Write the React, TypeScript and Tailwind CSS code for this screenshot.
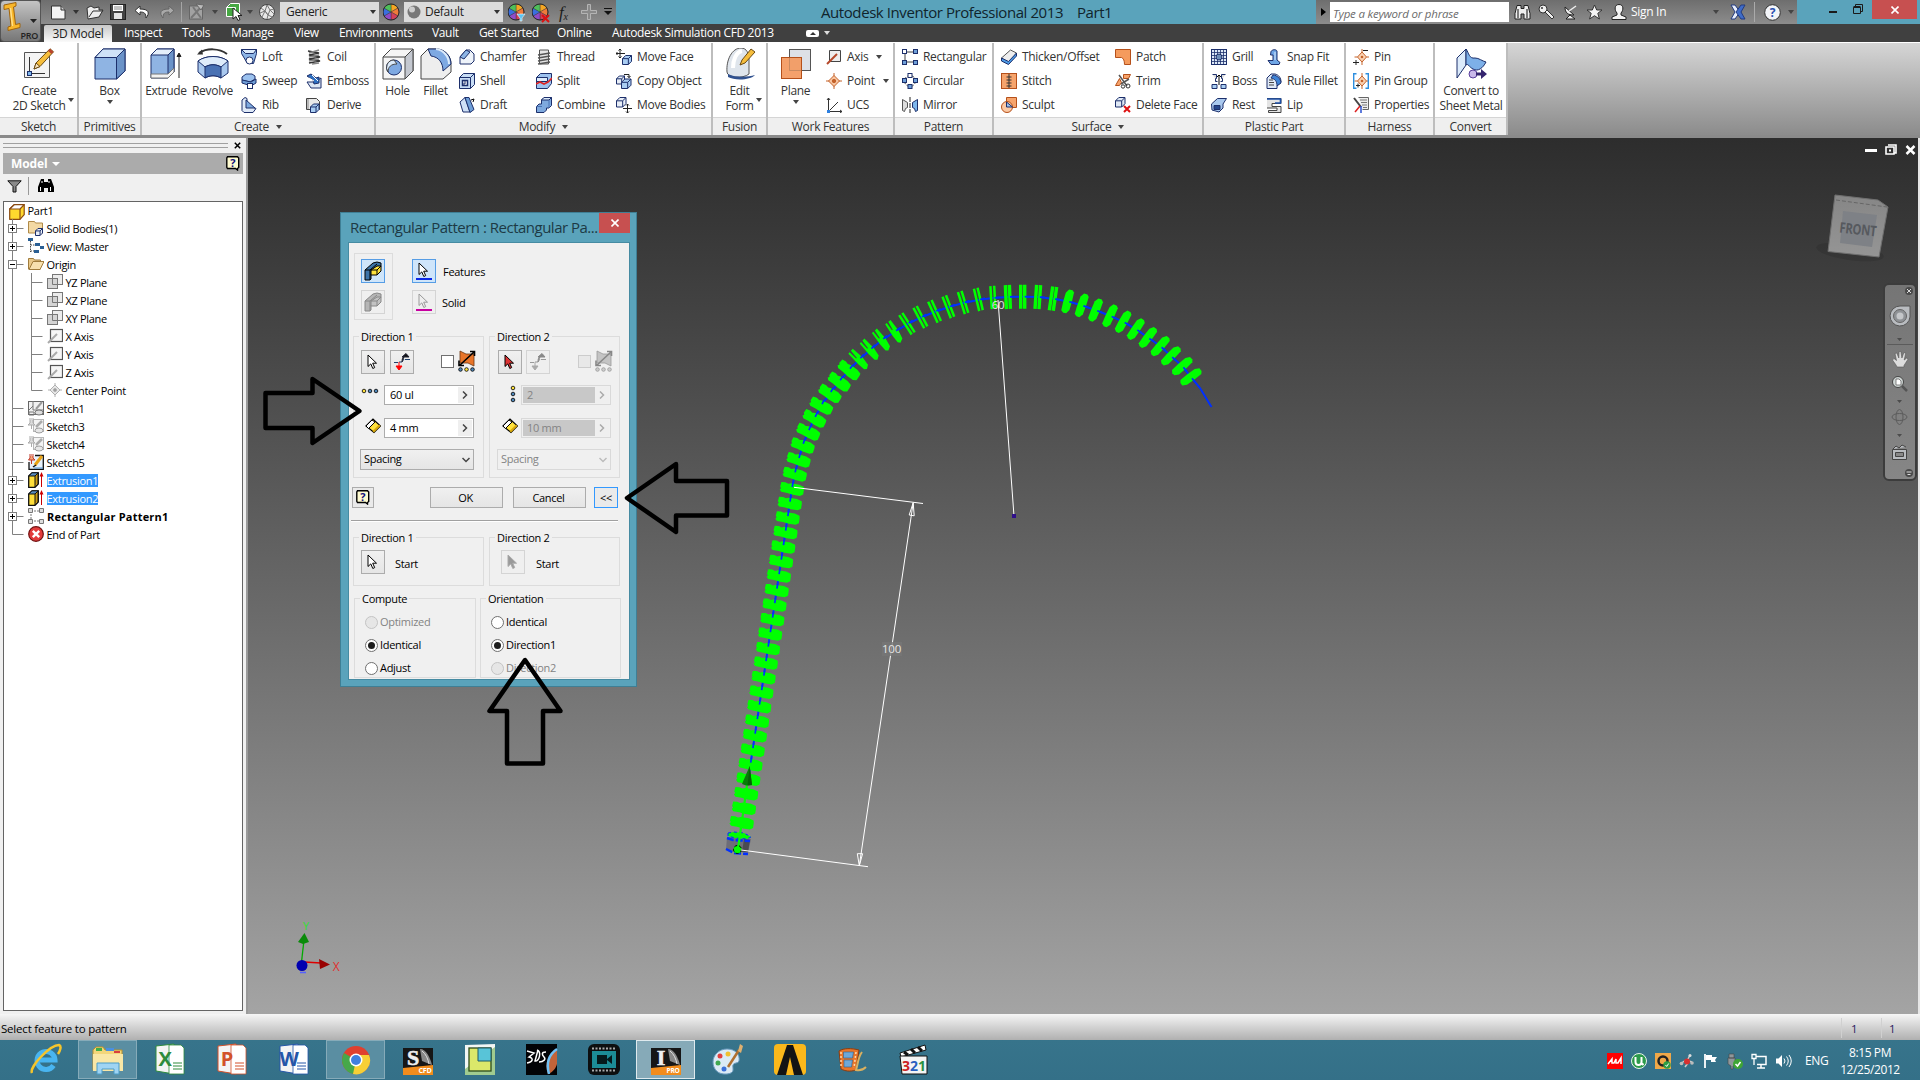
import type { ReactNode } from "react"

const INK = "#1c2f6b"

// ── 16px icons ─────────────────────────────────────────────
const cube = (x: number, y: number, s: number, fill = "#a9cdf2") => (
  <g fill={fill} stroke={INK} strokeLinejoin="round">
    <path d={`M${x} ${y + s * 0.35}l${s * 0.35} ${-s * 0.35}h${s * 0.65}v${s * 0.65}l${-s * 0.35} ${s * 0.35}h${-s * 0.65}z`} />
    <path d={`M${x} ${y + s * 0.35}h${s * 0.65}v${s * 0.65}M${x + s * 0.65} ${y + s * 0.35}l${s * 0.35} ${-s * 0.35}`} fill="none" />
  </g>
)

const pinShape = (
  <g>
    <path d="M9 3l4.5 5L9 13 4.500 8z" fill="#fbd3b3" stroke="#c4622a" />
    <path d="M9 0v3M9 13v3M1.500 8h3M13.500 8h2.500" stroke="#c4622a" />
    <circle cx="9" cy="8" r="1.300" fill="#c4622a" />
  </g>
)

const ICONS: Record<string, ReactNode> = {
  loft: (
    <g stroke={INK}>
      <path d="M.5.5h15v4l-3 10h-6l-6-10z" fill="#8db5e6" />
      <path d="M.5.5h15l-3 4h-8z" fill="#dcebfb" />
      <circle cx="8.500" cy="11.500" r="3.500" fill="#fff" />
    </g>
  ),
  sweep: (
    <g stroke={INK} fill="#9cc2ef">
      <path d="M1 4l4-3h6l3 2v3l-5 3-8-2z" />
      <path d="M1 7l9 2 5-3v4l-5 3-9-3z" fill="#6f9fd8" />
      <rect x="6.500" y="10.500" width="5" height="5" fill="#fff" />
    </g>
  ),
  rib: (
    <g stroke={INK}>
      <path d="M1 3l3-2.500 2 1v6l9 4-3 4H3l-2-2z" fill="#dfe9f7" />
      <path d="M5 3v8h9z" fill="#7ea9de" />
    </g>
  ),
  coil: (
    <g stroke="#333" fill="none" strokeWidth="1.600">
      <path d="M2 2l11 2L3 6l11 2L3 10l11 2-11 2" />
      <path d="M13 1L3 4M13 6L3 8M13 10L3 12M13 14l-7 1" stroke="#888" />
    </g>
  ),
  emboss: (
    <g stroke={INK}>
      <path d="M1 9h8l6-4v10H5z" fill="#dce6f3" />
      <path d="M1 3l4-2 5 4 3-1v6l-5 1-1-4z" fill="#2d6fc0" />
      <path d="M3 5l5 3M6 2l6 6" stroke="#fff" />
    </g>
  ),
  derive: (
    <g>
      <path d="M.5 1.500h10l3 3v8H.5z" fill="#e8e8e8" stroke="#444" />
      <path d="M2 2v10" stroke="#888" />
      {cube(4.5, 7, 8.500)}
    </g>
  ),
  chamfer: (
    <g stroke={INK}>
      <path d="M1 8l6-7h4l4 4v7l-3 3H1z" fill="#eef3fa" />
      <path d="M1 8l6-7 4 2-6 7z" fill="#8db5e6" />
    </g>
  ),
  shell: (
    <g stroke={INK}>
      <path d="M.5 4.500l4-4h11v11l-4 4H.5z" fill="#c8ddf5" />
      <path d="M.5 4.500h11v11M11.500 4.500l4-4" fill="none" />
      <rect x="3.500" y="7.500" width="5" height="5" fill="#fff" strokeWidth="1.500" />
      <path d="M6 8v3h-2" fill="none" />
    </g>
  ),
  draft: (
    <g stroke={INK}>
      <path d="M1 5l5-4.500L11 15H4z" fill="#cfe1f7" />
      <path d="M6 .5h4l5 12-4 3z" fill="#6f9fd8" />
      <path d="M12 3l3-1-1 3" fill="none" stroke="#000" />
    </g>
  ),
  thread: (
    <g stroke="#555" fill="#e6e6e6">
      <path d="M3.500 1h9v14h-9z" />
      <path d="M2 6l12-2M2 9l12-2M2 12l12-2M2 15l12-2" strokeWidth="1.500" fill="none" />
    </g>
  ),
  split: (
    <g>
      <path d="M.5 4.500l4-4h11v10l-4 5H.5z" fill="#9dc2ee" stroke={INK} />
      <path d="M.5 4.500h11v4h-11z" fill="#dcebfb" stroke={INK} />
      <path d="M0 11l4-2 4 2 4-2 4-4" stroke="#d22" strokeWidth="1.600" fill="none" />
    </g>
  ),
  combine: (
    <g stroke={INK} strokeLinejoin="round">
      <path d="M5.500 3l2.500-2.500h7.500v8L13 11h-2.500v2L8 15.500H.5v-6L3 7h2.500z" fill="#7ea9de" />
      <path d="M5.500 3l2.500-2.500h7.500L13 3z" fill="#dcebfb" />
      <path d="M13 3v8M.5 9.500h5.500" fill="none" stroke="#4a72b4" />
    </g>
  ),
  moveFace: (
    <g>
      <path d="M4 0v9M0 4.500h9M2.500 1.500L4 0l1.500 1.500M2.500 7.500L4 9l1.500-1.500M1.500 3L0 4.500 1.500 6" stroke="#222" fill="none" />
      {cube(6.500, 6.500, 9)}
    </g>
  ),
  copyObject: (
    <g>
      {cube(0.500, 3, 8, "#e8eef7")}
      {cube(5.500, 6, 9.500)}
      <path d="M8 1.500h5v3M11.500 3l1.500 1.700L14.500 3" stroke="#222" fill="none" />
    </g>
  ),
  moveBodies: (
    <g>
      {cube(0.500, 0.500, 9.500, "#e8eef7")}
      <path d="M11.500 7v9M7 11.500h9M10 8.500L11.500 7 13 8.500M10 14.500l1.500 1.500 1.500-1.500" stroke="#222" fill="none" />
    </g>
  ),
  axis: (
    <g>
      <path d="M3.500 1.500h11v11h-11z" fill="#eee" stroke="#444" />
      <path d="M1 15L11 5" stroke="#b5482a" strokeWidth="2" />
    </g>
  ),
  point: (
    <g stroke="#c4622a">
      <path d="M0 8h16M8 0v16" />
      <path d="M8 2.500L13.500 8 8 13.500 2.500 8z" fill="#f9c7a3" />
      <circle cx="8" cy="8" r="1.700" fill="#c4622a" />
    </g>
  ),
  ucs: (
    <g stroke="#333" fill="none">
      <path d="M2.500 1v13.500H16M2.500 14.500L12 5M1 3l1.500-2L4 3M14 13l2 1.500-2 1.500" />
      <rect x="1" y="13" width="3" height="3" fill="#2d7fe0" stroke="none" />
    </g>
  ),
  rectangular: (
    <g fill="#fff" stroke={INK}>
      <path d="M3 3h10M3 13h10M3 3v10" stroke="#444" />
      <rect x=".5" y=".5" width="4" height="4" />
      <rect x="11.500" y=".5" width="4" height="4" fill="#6f9fd8" />
      <rect x=".5" y="11.500" width="4" height="4" fill="#6f9fd8" />
      <rect x="11.500" y="11.500" width="4" height="4" fill="#6f9fd8" />
    </g>
  ),
  circular: (
    <g fill="#6f9fd8" stroke={INK}>
      <circle cx="8" cy="8" r="5.500" fill="none" stroke="#444" strokeDasharray="3 1.500" />
      <rect x="6" y=".5" width="4" height="4" fill="#fff" />
      <rect x=".5" y="5.500" width="4" height="4" />
      <rect x="11.500" y="5.500" width="4" height="4" />
      <rect x="6" y="11.500" width="4" height="4" />
    </g>
  ),
  mirror: (
    <g>
      <path d="M.5 2.500l5 3v5l-2 1-1 3-2-1z" fill="#ddd" stroke="#555" />
      <path d="M15.500 2.500l-5 3v5l2 1 1 3 2-1z" fill="#7db6ec" stroke={INK} />
      <path d="M8 0v16" stroke="#222" strokeDasharray="5 1" />
    </g>
  ),
  thicken: (
    <g stroke="#555">
      <path d="M.5 9l9-8 6 3-8 10z" fill="#eee" />
      <path d="M.5 9l7 3.500L15.500 4v3l-8 8.500-7-3.500z" fill="#4d9be6" stroke={INK} />
    </g>
  ),
  stitch: (
    <g stroke="#b5501a">
      <rect x=".5" y=".5" width="15" height="15" fill="#f6a46c" />
      <path d="M8 1v14M5.500 4h5M5.500 7h5M5.500 10h5M5.500 13h5" stroke="#333" />
    </g>
  ),
  sculpt: (
    <g>
      <path d="M5.500.5h10v10h-10z" fill="#f6a46c" stroke="#b5501a" />
      <circle cx="6" cy="10" r="5.500" fill="#fbc9a4" stroke="#b5501a" />
      <path d="M5.500 5l6 5h-6z" fill="#9cc2ef" stroke={INK} />
    </g>
  ),
  patch: <path d="M.5.500h15v15h-6c0-4-1-6-3-7H.5z" fill="#f59b5d" stroke="#b5501a" />,
  trim: (
    <g>
      <path d="M8.500 1.500h7l-2 4h-5zM.5 12.500l4-7 2 4-2 3z" fill="#f6a46c" stroke="#b5501a" />
      <path d="M4 2l8 11M14 6L6 11" stroke="#555" strokeWidth="1.500" />
      <circle cx="13" cy="13" r="2" fill="none" stroke="#333" />
      <circle cx="8" cy="13.500" r="1.700" fill="none" stroke="#333" />
    </g>
  ),
  deleteFace: (
    <g>
      {cube(0.500, 0.500, 9.500, "#e0e9f5")}
      <path d="M9 9l6 6M15 9l-6 6" stroke="#d11" strokeWidth="2" />
    </g>
  ),
  grill: (
    <g stroke={INK}>
      <rect x=".5" y=".5" width="15" height="15" fill="#dde9f7" />
      <path d="M3.500 1v14M6.500 1v14M9.500 1v14M12.500 1v14M1 3.500h14M1 6.500h14M1 9.500h14M1 12.500h14" strokeWidth=".8" />
      <circle cx="8" cy="8" r="3" fill="#6f8fb8" />
    </g>
  ),
  boss: (
    <g stroke={INK} fill="#a9cdf2">
      <path d="M1.500 1.500h4v4h-1v3h2M14.500 1.500h-4v4h1v3h-2" fill="#ddd" />
      <path d="M1 15.500v-4h5v4zM10 15.500v-4h5v4z" />
      <path d="M8 12V2M6 4l2-2 2 2" fill="none" stroke="#000" />
    </g>
  ),
  rest: (
    <g stroke={INK}>
      <path d="M.5 7l6-5.500h9L12 7v4l-4 4-7-2z" fill="#a9c8ee" />
      <path d="M3 8.500h6v4H3z" fill="#24458c" />
    </g>
  ),
  snapFit: (
    <g stroke={INK}>
      <path d="M5 2.500C6 .5 10 0 11 2v9l3 2.500-1 2H5l-3-4h5V6H4.500z" fill="#6fa6e6" />
      <path d="M9 3v8" stroke="#dcebfb" />
    </g>
  ),
  ruleFillet: (
    <g stroke={INK}>
      <path d="M1 5l4-4h4c4 1 6 4 6 8l-4 4v2.500H1z" fill="#dfe9f7" />
      <path d="M7 2c4 0 8 4 8 8l-4 3c0-5-2-7-6-8z" fill="#3f83d6" />
      <path d="M3 7h4M3 9.500h5M3 12h5" stroke="#444" />
    </g>
  ),
  lip: (
    <g>
      <path d="M1 1.500h14v5H6v3h9v6H2.500v-2H11V11H1" fill="#e4e4e4" stroke="#444" />
      <path d="M1 2h13.500v4H9" fill="none" stroke="#1c4fa8" strokeWidth="1.600" />
    </g>
  ),
  pin: (
    <g>
      {pinShape}
      <path d="M0 13.500h6M3 11v5M10 1.500h5" stroke="#222" />
    </g>
  ),
  pinGroup: (
    <g>
      {pinShape}
      <path d="M3.500.7H.7v14.600h2.800M12.500.7h2.800v14.600h-2.800" fill="none" stroke="#2d8fe0" strokeWidth="1.400" />
      <path d="M3 12.500h4M5 10.500v4" stroke="#222" />
    </g>
  ),
  properties: (
    <g>
      <path d="M5.500.5h10v12h-6" fill="#eee" stroke="#666" />
      <path d="M7 3h7M8 5.500h6M9 8h5M10 10.500h4" stroke="#777" />
      <path d="M1 1l7 9" stroke="#444" strokeWidth="2" />
      <path d="M7 9l-5 6" stroke="#d22" strokeWidth="1.500" />
      <path d="M8 9v7" stroke="#2a4fd0" strokeWidth="1.500" />
    </g>
  ),
}

// ── 32px ribbon icons ──────────────────────────────────────
const BIG: Record<string, ReactNode> = {
  sketch: (
    <g>
      <path d="M1.500 4.500h25v25h-25z" fill="#f4f4f4" stroke="#555" />
      <path d="M6.500 9v16.500H22" fill="none" stroke="#333" />
      <rect x="4.500" y="23.500" width="4" height="4" fill="#7db6ec" stroke={INK} />
      <path d="M11 21l2-6L27 .8l3.500 3L17 18.500z" fill="#f5bd3c" stroke="#6b4a12" />
      <path d="M11 21l2-6 4 3.500z" fill="#f7e3bd" stroke="#6b4a12" />
      <path d="M25 3l3.500 3 2-2.200L27 .8z" fill="#b9432f" />
    </g>
  ),
  box: (
    <g stroke={INK} strokeLinejoin="round">
      <path d="M1 9.500L9 1h22v22l-8.500 8H1z" fill="#8fb4e3" />
      <path d="M1 9.500L9 1h22l-8.500 8.500z" fill="#cfe2f7" />
      <path d="M22.500 9.500L31 1v22l-8.500 8z" fill="#6b93c8" />
    </g>
  ),
  extrude: (
    <g stroke={INK} strokeLinejoin="round">
      <path d="M1 7l6-6h17v23l-6 6H1z" fill="#8fb4e3" />
      <path d="M1 7l6-6h17l-6 6z" fill="#e3eefa" />
      <path d="M18 7l6-6v23l-6 6z" fill="#6b93c8" />
      <path d="M1 26h17l6-6v4l-6 6H1z" fill="#f2f2f2" stroke="#777" />
      <path d="M29 30V6M27 8.500L29 5l2 3.500z" stroke="#222" fill="#222" />
    </g>
  ),
  revolve: (
    <g stroke={INK} strokeLinejoin="round">
      <path d="M1 13c8-6 22-6 30 0v12l-7 5c-5-3-11-3-16 0l-7-6z" fill="#a9c8ee" />
      <path d="M1 13c8-6 22-6 30 0l-7 6c-5-3-11-3-16 0z" fill="#dfecfa" />
      <path d="M8 19c5-3 11-3 16 0v11c-5-3-11-3-16 0z" fill="#4a72b4" />
      <path d="M2 5c8-5 20-5 28 1" stroke="#333" strokeWidth="2" fill="none" />
      <path d="M0 6.500L5 1.500l1 5z" fill="#333" stroke="none" />
    </g>
  ),
  hole: (
    <g stroke="#444" strokeLinejoin="round">
      <path d="M1 9l8-8h22v22l-8 8H1z" fill="#f5f5f5" />
      <path d="M23 9l8-8v22l-8 8z" fill="#c4c8d0" />
      <path d="M1 9h22" fill="none" />
      <circle cx="12" cy="19.500" r="7.500" fill="#7ea9e2" stroke={INK} />
      <path d="M12 12a7.500 7.500 0 00-6 12c0-5 3-8 9-8z" fill="#dcebfb" />
    </g>
  ),
  fillet: (
    <g stroke="#444" strokeLinejoin="round">
      <path d="M1 8l7-7h8c9 0 15 7 15 15v8l-8 7H1z" fill="#eee" />
      <path d="M8 1h8c9 0 15 7 15 15l-8 7c0-8-4-14-12-15z" fill="#7ea9e2" stroke={INK} />
      <path d="M16 1c8 1 13 8 13 15" fill="none" stroke="#dcebfb" strokeWidth="2" />
    </g>
  ),
  form: (
    <g>
      <path d="M3 24C2 12 8 0 17 0c6 0 8 6 8 12v14c-6 5-22 4-22-2z" fill="#dfe5ec" stroke="#555" />
      <path d="M4 26c8 4 20 3 27 1-4 5-20 6-27 2z" fill="#30518f" />
      <path d="M9 20C9 12 12 4 18 3" stroke="#fff" strokeWidth="4" fill="none" />
      <path d="M16 17l2-5L27 1l4 3-10 11z" fill="#f5bd3c" stroke="#6b4a12" />
    </g>
  ),
  plane: (
    <g>
      <rect x="9.500" y="1.500" width="21" height="21" fill="#dde0e6" stroke="#555" />
      <rect x="1.500" y="9.500" width="20" height="21" fill="#f3995f" fillOpacity=".92" stroke="#b5501a" />
      <path d="M9.500 10v12.500H21" stroke="#c98a60" fill="none" />
    </g>
  ),
  convert: (
    <g>
      <path d="M2 10L11 1v16L2 30z" fill="#dcebfb" stroke={INK} />
      <path d="M11 1c3 4 3 10 9 9 4 0 7 3 11 4-3 6-8 10-13 7-4-2-5-6-7-4z" fill="#7db0e8" stroke={INK} />
      <circle cx="18" cy="26" r="4" fill="#c9b8ea" stroke="#5a3f9c" />
      <path d="M21 24.500h5V21l6 5-6 5v-3.500h-5z" fill="#34246e" />
    </g>
  ),
}

type Item = { icon: string; label: string; drop?: boolean }
type BigItem = { icon: string; label: string[]; width: string; drop?: "side" | "below" }
type Column = { items: Item[]; width: string }
type Panel = { title: string; width: string; drop?: boolean; big?: BigItem[]; columns?: Column[] }

const it = (icon: string, label: string, drop?: boolean): Item => ({ icon, label, drop })

const PANELS: Panel[] = [
  { title: "Sketch", width: "w-[79px]", big: [{ icon: "sketch", label: ["Create", "2D Sketch"], width: "w-[78px]", drop: "side" }] },
  { title: "Primitives", width: "w-[63px]", big: [{ icon: "box", label: ["Box"], width: "w-[61px]", drop: "below" }] },
  {
    title: "Create", width: "w-[234px]", drop: true,
    big: [
      { icon: "extrude", label: ["Extrude"], width: "w-[48px]" },
      { icon: "revolve", label: ["Revolve"], width: "w-[45px]" },
    ],
    columns: [
      { width: "ml-[6px] w-[65px]", items: [it("loft", "Loft"), it("sweep", "Sweep"), it("rib", "Rib")] },
      { width: "w-[65px]", items: [it("coil", "Coil"), it("emboss", "Emboss"), it("derive", "Derive")] },
    ],
  },
  {
    title: "Modify", width: "w-[337px]", drop: true,
    big: [
      { icon: "hole", label: ["Hole"], width: "w-[43px]" },
      { icon: "fillet", label: ["Fillet"], width: "w-[33px]" },
    ],
    columns: [
      { width: "ml-[7px] w-[77px]", items: [it("chamfer", "Chamfer"), it("shell", "Shell"), it("draft", "Draft")] },
      { width: "w-[80px]", items: [it("thread", "Thread"), it("split", "Split"), it("combine", "Combine")] },
      { width: "w-[94px]", items: [it("moveFace", "Move Face"), it("copyObject", "Copy Object"), it("moveBodies", "Move Bodies")] },
    ],
  },
  { title: "Fusion", width: "w-[55px]", big: [{ icon: "form", label: ["Edit", "Form"], width: "w-[53px]", drop: "side" }] },
  {
    title: "Work Features", width: "w-[127px]",
    big: [{ icon: "plane", label: ["Plane"], width: "w-[55px]", drop: "below" }],
    columns: [{ width: "ml-[3px] w-[65px]", items: [it("axis", "Axis", true), it("point", "Point", true), it("ucs", "UCS")] }],
  },
  {
    title: "Pattern", width: "w-[99px]",
    columns: [{ width: "ml-[7px] w-[89px]", items: [it("rectangular", "Rectangular"), it("circular", "Circular"), it("mirror", "Mirror")] }],
  },
  {
    title: "Surface", width: "w-[210px]", drop: true,
    columns: [
      { width: "ml-[7px] w-[114px]", items: [it("thicken", "Thicken/Offset"), it("stitch", "Stitch"), it("sculpt", "Sculpt")] },
      { width: "w-[86px]", items: [it("patch", "Patch"), it("trim", "Trim"), it("deleteFace", "Delete Face")] },
    ],
  },
  {
    title: "Plastic Part", width: "w-[142px]",
    columns: [
      { width: "ml-[7px] w-[55px]", items: [it("grill", "Grill"), it("boss", "Boss"), it("rest", "Rest")] },
      { width: "w-[77px]", items: [it("snapFit", "Snap Fit"), it("ruleFillet", "Rule Fillet"), it("lip", "Lip")] },
    ],
  },
  {
    title: "Harness", width: "w-[89px]",
    columns: [{ width: "ml-[7px] w-[79px]", items: [it("pin", "Pin"), it("pinGroup", "Pin Group"), it("properties", "Properties")] }],
  },
  { title: "Convert", width: "w-[73px]", big: [{ icon: "convert", label: ["Convert to", "Sheet Metal"], width: "w-[72px]" }] },
]

function Caret({ className = "" }: { className?: string }) {
  return <span className={`inline-block h-0 w-0 border-x-[3px] border-t-[4px] border-x-transparent ${className}`} />
}

function RibbonPanel({ panel }: { panel: Panel }) {
  return (
    <div className={`flex h-full shrink-0 flex-col border-r-2 border-[#bdbdbd] bg-white ${panel.width}`}>
      <div className="flex h-[75px] pt-[2px]">
        {panel.big?.map((b) => (
          <div key={b.icon} className={`relative flex shrink-0 flex-col items-center pt-[3px] ${b.width}`}>
            <svg width="32" height="32" viewBox="0 0 32 32" className="shrink-0">{BIG[b.icon]}</svg>
            <div className="mt-[3px] text-center leading-[15px] whitespace-nowrap">
              {b.label.map((l) => <div key={l}>{l}</div>)}
            </div>
            {b.drop === "below" && <Caret className="mt-[2px] border-x-[2px] border-t-[3px] border-t-[#444]" />}
            {b.drop === "side" && <Caret className="absolute right-[4px] bottom-[15px] border-x-[2px] border-t-[3px] border-t-[#444]" />}
          </div>
        ))}
        {panel.columns?.map((c, i) => (
          <div key={i} className={`shrink-0 ${c.width}`}>
            {c.items.map((item) => (
              <div key={item.label} className="flex h-[24px] items-center whitespace-nowrap">
                <svg width="16" height="16" viewBox="0 0 16 16" className="mr-[5px] shrink-0">{ICONS[item.icon]}</svg>
                {item.label}
                {item.drop && <Caret className="ml-[8px] border-x-[2px] border-t-[3px] border-t-[#444]" />}
              </div>
            ))}
          </div>
        ))}
      </div>
      <div className="flex h-[18px] items-center justify-center gap-[7px] border-t border-[#d5d5d5] bg-[#efefef] whitespace-nowrap">
        {panel.title}
        {panel.drop && <Caret className="border-t-[#444]" />}
      </div>
    </div>
  )
}

// ── Title bar ──────────────────────────────────────────────
function ColorBall({ badge }: { badge?: "apply" | "clear" }) {
  return (
    <svg width="18" height="20" viewBox="0 0 18 20">
      <g stroke="#333" strokeWidth=".4">
        <path d="M8 9V1a8 8 0 017 4z" fill="#f5a623" />
        <path d="M8 9l7-4a8 8 0 010 8z" fill="#f07a3a" />
        <path d="M8 9l7 4a8 8 0 01-7 4z" fill="#d4405a" />
        <path d="M8 9v8a8 8 0 01-7-4z" fill="#8f4cc8" />
        <path d="M8 9l-7 4a8 8 0 010-8z" fill="#3a6fe0" />
        <path d="M8 9L1 5a8 8 0 017-4z" fill="#4fbf5a" />
      </g>
      <circle cx="8" cy="9" r="8" fill="none" stroke="#2c2c2c" />
      {badge === "apply" && <path d="M9 11h8l-3 4v3h-2v-3z" fill="#5cc3f0" stroke="#fff" strokeWidth=".6" />}
      {badge === "clear" && <path d="M10 12l7 7M17 12l-7 7" stroke="#d11" strokeWidth="2" />}
    </svg>
  )
}

function QuickAccess() {
  return (
    <div className="flex h-[24px] w-[575px] shrink-0 items-center bg-linear-to-b from-[#6e6e6e] to-[#8d8d8d] pl-[9px]">
      <svg width="16" height="16" viewBox="0 0 16 16"><path d="M1.500 2h9.500l4 4v9h-13.500z" fill="#f4f4f4" stroke="#333" /><path d="M11 2v4h4" fill="#ccc" stroke="#333" /></svg>
      <Caret className="ml-[7px] border-t-[#333]" />
      <svg width="18" height="16" viewBox="0 0 18 16" className="ml-[7px]"><path d="M1 4l4-2 3 2 5-1v3h4l-4 7-11 2z" fill="#eee" stroke="#333" /><path d="M3 13L7 7h10" fill="none" stroke="#333" /></svg>
      <svg width="16" height="16" viewBox="0 0 16 16" className="ml-[6px]"><rect x=".5" y=".5" width="15" height="15" fill="#444" stroke="#222" /><rect x="3" y="1" width="10" height="6" fill="#fff" /><rect x="4" y="9" width="8" height="6" fill="#e4e4e4" /><path d="M4 3h8M4 5h8" stroke="#888" /></svg>
      <svg width="16" height="14" viewBox="0 0 16 14" className="ml-[8px]"><path d="M6 1L1 5.500 6 10V7c4 0 6 1 6 6 4-5 3-9-6-9z" fill="#fff" stroke="#333" /></svg>
      <svg width="16" height="14" viewBox="0 0 16 14" className="ml-[9px]"><path d="M10 1l5 4.500L10 10V7c-4 0-6 1-6 6-4-5-3-9 6-9z" fill="#a9a9a9" stroke="#666" /></svg>
      <span className="ml-[6px] h-[20px] w-px bg-[#a5a5a5]" />
      <svg width="16" height="18" viewBox="0 0 16 18" className="ml-[7px]"><rect x=".5" y="3" width="13" height="13" fill="#a2a2a2" stroke="#666" /><path d="M2 15L13 3M4 4l8 11" stroke="#777" strokeWidth="2" /><path d="M7 1l8 1-3 5z" fill="#bbb" stroke="#666" /></svg>
      <Caret className="ml-[7px] border-t-[#444]" />
      <svg width="17" height="18" viewBox="0 0 17 18" className="ml-[8px]"><path d="M.5 4.500l4-4h9v9l-3 4H.5z" fill="#46a843" stroke="#fff" /><path d="M.5 4.500h9v9" fill="none" stroke="#fff" /><path d="M7 5v11l3-2.500 2 4 2-1-2-4h4z" fill="#fff" stroke="#222" /></svg>
      <Caret className="ml-[4px] border-t-[#444]" />
      <svg width="16" height="16" viewBox="0 0 16 16" className="ml-[6px]"><circle cx="8" cy="8" r="7.500" fill="#e8e8e8" stroke="#444" /><path d="M2 4l4 3 2-6 3 5 4-1M1 9l5-2 3 4 2-5 4 4M3 13l3-6 3 4 4 2M8 15l1-4" stroke="#777" fill="none" /></svg>
      <div className="ml-[5px] flex h-[20px] w-[99px] items-center justify-between bg-[#dcdcdc] pr-[3px] pl-[6px] text-[12px] text-[#222]">
        Generic <Caret className="border-x-[3.5px] border-t-[#333]" />
      </div>
      <div className="ml-[4px] flex w-[18px] pt-[2px]"><ColorBall /></div>
      <div className="ml-[3px] flex h-[20px] w-[99px] items-center bg-[#dcdcdc] pr-[3px] pl-[3px] text-[12px] text-[#222]">
        <svg width="14" height="14" viewBox="0 0 14 14"><circle cx="7" cy="7" r="6.500" fill="#777" /><circle cx="5" cy="4.500" r="3" fill="#ccc" /></svg>
        <span className="ml-[4px] grow">Default</span>
        <Caret className="border-x-[3.5px] border-t-[#333]" />
      </div>
      <div className="ml-[5px] flex pt-[2px]"><ColorBall badge="apply" /></div>
      <div className="ml-[6px] flex pt-[2px]"><ColorBall badge="clear" /></div>
      <span className="ml-[9px] w-[16px] font-['Liberation_Serif',serif] text-[17px] leading-none text-[#1b1b1b] italic">f<sub className="text-[10px]">x</sub></span>
      <svg width="16" height="16" viewBox="0 0 16 16" className="ml-[6px]"><path d="M6.500.5h3v6h6v3h-6v6h-3v-6h-6v-3h6z" fill="#8a8a8a" stroke="#b4b4b4" /></svg>
      <svg width="8" height="8" viewBox="0 0 8 8" className="ml-[7px]"><path d="M0 .5h8" stroke="#111" /><path d="M0 3h8L4 7z" fill="#111" /></svg>
    </div>
  )
}

function InfoCenter() {
  return (
    <div className="flex h-[24px] w-[481px] items-center bg-linear-to-b from-[#6e6e6e] to-[#8d8d8d]">
      <span className="ml-[5px] h-0 w-0 border-y-[4px] border-l-[5px] border-y-transparent border-l-black" />
      <div className="ml-[4px] flex h-[20px] w-[179px] items-center bg-white pt-[3px] pl-[3px] text-[11.5px] tracking-[-0.2px] text-[#6b6b6b] italic">
        Type a keyword or phrase
      </div>
      <svg width="17" height="16" viewBox="0 0 17 16" className="ml-[5px]"><path d="M3 1.500h4v3h3v-3h4l2 8v5.500h-6V10H7v5H1V9.500z" fill="#eee" stroke="#222" /><path d="M4 5v9M13 5v9" stroke="#555" strokeWidth="1.500" /></svg>
      <svg width="17" height="16" viewBox="0 0 17 16" className="ml-[7px]"><circle cx="5" cy="5" r="4" fill="#eee" stroke="#333" /><path d="M7 8l7 7 2-2-7-7z" fill="#eee" stroke="#333" /><circle cx="4" cy="4" r="1" fill="#333" /></svg>
      <svg width="14" height="16" viewBox="0 0 14 16" className="ml-[9px]"><path d="M1 3c0 6 3 8 9 8zM6 11l-4 4h9z" fill="#eee" stroke="#222" /><path d="M5 7l7-5" stroke="#eee" strokeWidth="1.500" /></svg>
      <svg width="17" height="16" viewBox="0 0 17 16" className="ml-[8px]"><path d="M8.500 1l2.200 5h5.300l-4.200 3.300 1.600 5.700-4.900-3.300L3.600 15l1.600-5.700L1 6h5.300z" fill="#f4f4f4" stroke="#333" /></svg>
      <svg width="16" height="16" viewBox="0 0 16 16" className="ml-[8px]"><path d="M8 .5c5 0 4.500 6 2 8.500v2l5 2v2.500H1V13l5-2V9C3.500 6.500 3 .5 8 .5z" fill="#f4f4f4" stroke="#222" /></svg>
      <span className="ml-[4px] w-[82px] text-[12px] text-white">Sign In</span>
      <Caret className="border-x-[2.5px] border-t-[#444]" />
      <svg width="16" height="16" viewBox="0 0 16 16" className="ml-[11px]"><path d="M1 1h4l5 7-5 7H1l4-7z" fill="#e8eefb" stroke="#223b80" /><path d="M15 1h-4L6 8l5 7h4l-4-7z" fill="#3f6cc8" stroke="#223b80" /></svg>
      <span className="ml-[8px] h-[20px] w-px bg-[#aaa]" />
      <svg width="17" height="17" viewBox="0 0 17 17" className="ml-[9px]"><circle cx="8.500" cy="8.500" r="7.800" fill="#f2f4f8" stroke="#333" /><text x="8.500" y="13" fontSize="12" fontWeight="bold" textAnchor="middle" fill="#2a4fb0">?</text></svg>
      <Caret className="ml-[7px] border-x-[2.5px] border-t-[#444]" />
    </div>
  )
}

const TABS = [
  { label: "Inspect", width: "w-[38px]" },
  { label: "Tools", width: "w-[29px]" },
  { label: "Manage", width: "w-[43px]" },
  { label: "View", width: "w-[25px]" },
  { label: "Environments", width: "w-[73px]" },
  { label: "Vault", width: "w-[27px]" },
  { label: "Get Started", width: "w-[58px]" },
  { label: "Online", width: "w-[35px]" },
  { label: "Autodesk Simulation CFD 2013", width: "w-[163px]" },
]

function Header() {
  return (
    <header className="flex h-[42px] shrink-0">
      <div className="relative h-[42px] w-[41px] shrink-0 rounded-sm border border-[#555] bg-linear-to-b from-[#c4c4c4] to-[#777]">
        <svg width="39" height="40" viewBox="0 0 39 40" className="absolute top-0 left-0">
          <path d="M3 4l12-2.500V5l-2.500 1 2 17.500 4.500-1v4L7 29.500V26l3-1L8 7.500 3 8.500z" fill="#f8b62a" stroke="#a0640c" />
          <path d="M9.500 7l2 18" stroke="#ffe08a" strokeWidth="1.500" />
          <path d="M29 18h7l-3.500 4z" fill="#222" />
        </svg>
        <span className="absolute right-[2px] bottom-[-1px] text-[9px] font-semibold text-[#222]">PRO</span>
      </div>
      <div className="flex grow flex-col">
        <div className="flex h-[24px] bg-[#5aa3bb]">
          <QuickAccess />
          <div className="ml-[205px] w-[495px] shrink-0 text-[15px] leading-[25px] tracking-[-0.42px] whitespace-pre text-[#10242c]">Autodesk Inventor Professional 2013{"    "}Part1</div>
          <div className="shrink-0"><InfoCenter /></div>
          <div className="flex grow justify-end pr-[3px]">
            <span className="mt-[11px] mr-[16px] h-[2px] w-[8px] bg-[#1a1a1a]" />
            <svg width="10" height="11" viewBox="0 0 10 11" className="mt-[4px] mr-[9px]"><path d="M2.500 2.500v-2h7v7h-2M.5 3.500h7v6h-7z" fill="none" stroke="#1a1a1a" /><path d="M.5 3h7" stroke="#1a1a1a" strokeWidth="2" /></svg>
            <div className="flex h-[19px] w-[45px] items-center justify-center bg-[#c75050]">
              <svg width="8" height="8" viewBox="0 0 8 8"><path d="M.5.5l7 7M7.500.5l-7 7" stroke="#fff" strokeWidth="1.600" /></svg>
            </div>
          </div>
        </div>
        <div className="flex h-[18px] items-center bg-[#404040] tracking-[-0.35px] text-white">
          <div className="ml-[3px] flex h-[17px] w-[68px] items-center justify-center self-end rounded-t-xs bg-linear-to-b from-[#c9c9c9] to-[#fafafa] text-[#222]">3D Model</div>
          <div className="ml-[12px] flex gap-[20px]">
            {TABS.map((t) => <span key={t.label} className={`whitespace-nowrap ${t.width}`}>{t.label}</span>)}
          </div>
          <span className="ml-[31px] flex h-[7px] w-[13px] items-center justify-center rounded-xs bg-white"><span className="h-0 w-0 border-x-[3px] border-b-[3px] border-x-transparent border-b-[#333]" /></span>
          <Caret className="ml-[5px] border-x-[2.5px] border-t-[#ddd]" />
        </div>
      </div>
    </header>
  )
}

// ── Model browser ──────────────────────────────────────────
function HelpNote() {
  return (
    <svg width="14" height="15" viewBox="0 0 14 15">
      <path d="M1.500.8h10l1.200 1.200v9.500l-1.200 1V14l-2-1.500h-8L.8 11.300V2z" fill="#fffbd0" stroke="#000" strokeWidth="1.400" />
      <text x="6.700" y="10.600" fontSize="11" fontWeight="bold" textAnchor="middle" fill="#10107a">?</text>
    </svg>
  )
}

const skLines = <path d="M5 1v9h10M1 10l4-4M1 12h5v3H1z" fill="none" stroke="#777" />

const TREE_ICONS: Record<string, ReactNode> = {
  part: (
    <g stroke="#8a4a12" strokeWidth="1.200" strokeLinejoin="round">
      <path d="M.7 5l4.500-4.300h10v10L11 15.300H.7z" fill="#ffd92e" />
      <path d="M.7 5l4.500-4.300h10L11 5z" fill="#fff" />
      <path d="M11 5v10.300" />
    </g>
  ),
  bodies: (
    <g>
      <path d="M.5 1.500h6l1 1.500h7v10H.5z" fill="#f3d9a4" stroke="#b08a48" />
      {cube(7.500, 8.500, 7, "#e8eef7")}
    </g>
  ),
  view: (
    <g>
      <path d="M2.500 3v11M2.500 7h4M2.500 13h4" stroke="#444" strokeDasharray="1.500 1" fill="none" />
      <path d="M0 0h5v3H0zM7 5h5v3H7zM12 8h4v3h-4zM6 12h5v3H6z" fill="#2a5f94" />
    </g>
  ),
  origin: (
    <g stroke="#a07c3c">
      <path d="M.5 2.500h5l1 1.500h6v9H.5z" fill="#e9c888" />
      <path d="M1 13.500l4-8h11l-4 8z" fill="#f7e0ae" />
    </g>
  ),
  plane: (
    <g stroke="#777">
      <rect x="5.500" y=".5" width="10" height="10" fill="#ececec" />
      <rect x=".5" y="4.500" width="10" height="10" fill="#d4d4d4" />
      <path d="M5.500 4.500v6h5" fill="none" />
    </g>
  ),
  axis: (
    <g>
      <rect x="3.500" y="1.500" width="12" height="12" fill="#f6f6f6" stroke="#555" strokeWidth="1.200" />
      <path d="M1 15L10 6" stroke="#aaa" strokeWidth="2" />
    </g>
  ),
  center: (
    <g stroke="#b0b0b0" fill="#e6e6e6">
      <path d="M8 1v14M1 8h14" />
      <path d="M8 3l5 5-5 5-5-5z" />
      <circle cx="8" cy="8" r="1.500" fill="#999" />
    </g>
  ),
  sketch: (
    <g>
      <rect x=".5" y="1.500" width="15" height="13" fill="#f0f0f0" stroke="#666" />
      {skLines}
      <path d="M8 9l6-7" stroke="#999" strokeWidth="2" />
      <ellipse cx="11" cy="12.500" rx="4" ry="2.500" fill="#ddd" stroke="#777" />
    </g>
  ),
  sketchPin: (
    <g opacity=".7">
      <rect x="5.500" y="1.500" width="10" height="12" fill="#eee" stroke="#999" />
      <path d="M1 1h5M2 2v3l-2 2h7L5 5V2M3.500 7v4" stroke="#888" fill="#ccc" />
      <path d="M8 9l6-6" stroke="#888" strokeWidth="2.500" />
      <ellipse cx="11" cy="12.500" rx="4" ry="2.500" fill="#ddd" stroke="#777" />
    </g>
  ),
  sketchActive: (
    <g>
      <path d="M7 1.500h8.300v13.800H1V8" fill="#e8f1fb" stroke="#111" strokeWidth="1.300" />
      <path d="M1 1h5M2 2v2L.5 6H7L5 4V2M3.500 6v4" stroke="#c0392b" fill="#f5a87a" />
      <path d="M7 11l7-9" stroke="#e8a317" strokeWidth="3" />
      <path d="M5 13l3-2" stroke="#111" strokeWidth="1.500" />
      <path d="M6 14h9" stroke="#4a8fd0" />
    </g>
  ),
  extrusion: (
    <g>
      <path d="M.7 4L4 .8h6.300V12L7 15.300H.7z" fill="#ffdf3a" stroke="#111" strokeWidth="1.300" />
      <path d="M.7 4L4 .8h6.300L7 4z" fill="#5a8fc0" stroke="#111" />
      <path d="M7 4v11l3-3V1z" fill="#c99a10" stroke="#111" />
      <path d="M13.500 15V3" stroke="#c00" />
      <path d="M11.500 4.500L13.500 0l2 4.500z" fill="#c00" />
    </g>
  ),
  pattern: (
    <g fill="#ddd" stroke="#777">
      <path d="M3 3h10M3 13h10M3 3v10" strokeDasharray="2 1" />
      <path d="M.5.5h4v4h-4zM11.500.5h4v4h-4zM.5 11.500h4v4h-4zM11.500 11.500h4v4h-4z" />
    </g>
  ),
  end: (
    <g>
      <circle cx="8" cy="8" r="7.300" fill="#e23b3b" stroke="#701010" strokeWidth="1.200" />
      <path d="M4.800 4.800l6.400 6.400M11.200 4.800l-6.400 6.400" stroke="#fff" strokeWidth="2.400" />
    </g>
  ),
}

type Node = { label: string; icon: string; level: 1 | 2; expand?: "+" | "-"; selected?: boolean; bold?: boolean }

const TREE: Node[] = [
  { label: "Solid Bodies(1)", icon: "bodies", level: 1, expand: "+" },
  { label: "View: Master", icon: "view", level: 1, expand: "+" },
  { label: "Origin", icon: "origin", level: 1, expand: "-" },
  { label: "YZ Plane", icon: "plane", level: 2 },
  { label: "XZ Plane", icon: "plane", level: 2 },
  { label: "XY Plane", icon: "plane", level: 2 },
  { label: "X Axis", icon: "axis", level: 2 },
  { label: "Y Axis", icon: "axis", level: 2 },
  { label: "Z Axis", icon: "axis", level: 2 },
  { label: "Center Point", icon: "center", level: 2 },
  { label: "Sketch1", icon: "sketch", level: 1 },
  { label: "Sketch3", icon: "sketchPin", level: 1 },
  { label: "Sketch4", icon: "sketchPin", level: 1 },
  { label: "Sketch5", icon: "sketchActive", level: 1 },
  { label: "Extrusion1", icon: "extrusion", level: 1, expand: "+", selected: true },
  { label: "Extrusion2", icon: "extrusion", level: 1, expand: "+", selected: true },
  { label: "Rectangular Pattern1", icon: "pattern", level: 1, expand: "+", bold: true },
  { label: "End of Part", icon: "end", level: 1 },
]

function TreeRow({ node, last }: { node: Node; last: boolean }) {
  return (
    <div className="flex h-[18px] items-center pl-[4px]">
      <svg width={node.level === 1 ? 20 : 39} height="18" viewBox={node.level === 1 ? "0 0 20 18" : "0 0 39 18"} className="shrink-0">
        <path d={last ? "M4.500 0v9.500" : "M4.500 0v18"} stroke="#808080" fill="none" />
        {node.level === 1 && <path d="M4.500 9.500h11" stroke="#808080" />}
        {node.level === 2 && <path d={node.icon === "center" ? "M23.500 0v9.500h11" : "M23.500 0v18M23.500 9.500h11"} stroke="#808080" fill="none" />}
        {node.expand && <rect x=".5" y="5.500" width="8" height="8" fill="#fff" stroke="#808080" />}
        {node.expand && <path d={node.expand === "+" ? "M2 9.500h5M4.500 7v5" : "M2 9.500h5"} stroke="#000" />}
      </svg>
      <svg width="16" height="16" viewBox="0 0 16 16" className="shrink-0">{TREE_ICONS[node.icon]}</svg>
      <span className={`h-[13px] leading-[13px] whitespace-nowrap ${node.selected ? "bg-[#3399ff] text-white" : ""} ${node.bold ? "ml-[3px] font-bold tracking-[0.2px]" : "ml-[2.5px]"}`}>{node.label}</span>
    </div>
  )
}

function ModelBrowser() {
  return (
    <aside className="flex w-[248px] shrink-0 flex-col border-r-2 border-[#9a9a9a] bg-[#f0f0f0] pl-[3px] text-[11px] text-black">
      <div className="flex h-[15px] items-start pt-[5px]">
        <div className="h-[5px] w-[225px] border-y border-[#a0a0a0]" />
        <svg width="7" height="7" viewBox="0 0 7 7" className="-mt-px ml-[6px]"><path d="M.8.800l5.400 5.400M6.200.800L.8 6.200" stroke="#000" strokeWidth="1.500" /></svg>
      </div>
      <div className="flex h-[21px] w-[240px] items-center bg-[#ababab] pr-[3px] pl-[8px]">
        <span className="text-[12px] font-bold tracking-[-0.1px] text-white">Model</span>
        <Caret className="ml-[4px] border-x-[4px] border-t-white" />
        <span className="grow" />
        <HelpNote />
      </div>
      <div className="flex h-[27px] items-center pb-[3px]">
        <svg width="15" height="13" viewBox="0 0 15 13" className="ml-[4px]"><path d="M.8.8h13.400L9 6.500V12H6V6.500z" fill="#8a8a8a" stroke="#111" /></svg>
        <span className="ml-[6px] h-[18px] w-px bg-[#999]" />
        <svg width="16" height="14" viewBox="0 0 16 14" className="ml-[9px]"><path d="M3 0h3v3h4V0h3l3 8v5h-6V9H6v4H0V8z" fill="#000" /><path d="M2.500 8v4M12.500 8v4M4 2v2M11 2v2" stroke="#fff" /></svg>
      </div>
      <div className="h-[810px] w-[240px] border border-[#646464] bg-white">
        <div className="flex h-[17px] items-center pt-[2px] pl-[5px]">
          <svg width="16" height="16" viewBox="0 0 16 16">{TREE_ICONS.part}</svg>
          <span className="ml-[2.5px]">Part1</span>
        </div>
        {TREE.map((n, i) => <TreeRow key={n.label} node={n} last={i === TREE.length - 1} />)}
      </div>
    </aside>
  )
}

// ── Graphics window ────────────────────────────────────────
// Disc centres along the curved part of the path; the straight leg is generated below.
const ARC: [number, number][] = [
  [794.7, 474.3], [798.5, 460], [802.6, 445.7], [808.1, 432], [814.3, 418.7], [821.2, 406], [829.8, 393.7],
  [839.1, 382], [848.8, 370.3], [859.1, 359.7], [870.1, 350], [881.8, 340.3], [894.6, 332], [907, 324.3],
  [920.4, 317.7], [934.5, 312], [948.3, 307.3], [963, 303], [978.2, 300], [992.7, 298], [1007.9, 297],
  [1022.7, 296.7], [1037.8, 297], [1053, 298.7], [1067.4, 301.3], [1081.5, 305.3], [1095.3, 310],
  [1109.8, 315.7], [1122.9, 321.7], [1135.6, 329], [1147.7, 337.3], [1160, 346], [1170.7, 355.7],
  [1182, 366], [1190.7, 376.7],
]
const LEG: [number, number][] = Array.from({ length: 24 }, (_, i) => [741.7 + i * 2.183, 822.7 - i * 14.51])
const POINTS = [...LEG, ...ARC]

function Disc({ i }: { i: number }) {
  const [x, y] = POINTS[i]
  const a = POINTS[Math.max(i - 1, 0)]
  const b = POINTS[Math.min(i + 1, POINTS.length - 1)]
  const heading = (Math.atan2(b[1] - a[1], b[0] - a[0]) * 180) / Math.PI
  const skew = heading > -60 && heading < -8 ? 6 : 0
  let body: ReactNode
  if (heading > -30 && heading < -3) {
    // nearly edge-on: two thin rims
    body = <path d="M-12-2.700L11-1.700M-12 1.100L11 2" stroke="#0f0" strokeWidth="2.500" />
  } else if (heading > -46 && heading <= -30) {
    // rims open on the outside only
    body = <path d="M-12-4.300l13 .3 9 2 2 4-2 2h-8l-14-1.500v-2l9 .5v-1l-9-1.500z" fill="#0f0" />
  } else if (heading >= -3 && heading < 12) {
    body = <path d="M-12-2h24M-12 2h24" stroke="#0f0" strokeWidth="3.400" />
  } else if (heading >= 12) {
    body = <path d="M-12-2.500l2-2h8l10 .5 4 2.500v3l-2 2.500h-9l-9-.5-4-2.500z" fill="#0f0" />
  } else {
    body = <path d="M-11.500-5l4-.5 3 1 3-1h8l5 1.500.5 2.500v5l-3 2h-7l-6-.8-6-.2-2-2 1.200-1.500-1.200-1.500z" fill="#0f0" />
  }
  return (
    <g transform={`translate(${x} ${y}) rotate(${heading + 90 - skew})`}>
      {body}
      {i > 3 && <path d="M0-2v-5" stroke="#0030ff" strokeWidth="1.700" />}
    </g>
  )
}

function Scene() {
  return (
    <svg width="1670" height="876" viewBox="248 138 1670 876" className="absolute top-0 left-0">
      <defs>
        <linearGradient id="cubeFace" x1="0" y1="0" x2="0" y2="1">
          <stop offset="0" stopColor="#868686" />
          <stop offset="1" stopColor="#959595" />
        </linearGradient>
      </defs>
      <ellipse cx="1850" cy="252" rx="34" ry="8" fill="#222" opacity=".25" transform="rotate(8 1850 252)" />
      <path d="M1835 195l43 5 10 7-9 50-51-5.500z" fill="url(#cubeFace)" stroke="#6f6f6f" />
      <path d="M1836 200l51 7" stroke="#666" strokeDasharray="4 2" />
      <path d="M1843 211l34 4-5 32-32-4z" fill="#7e8186" />
      <text x="1858" y="234.500" fontSize="14.500" fontWeight="bold" textAnchor="middle" fill="#56595e" textLength="37" lengthAdjust="spacingAndGlyphs" transform="rotate(6 1858 229)">FRONT</text>

      {/* base part */}
      <path d="M727 837l24 2-3 14-22-3z" fill="#6d6d78" />
      <path d="M744 839l6 1-2 12-6 0z" fill="#4a4a52" />
      <path d="M727 838l6 2 17 1M726 849l8 4 14 1" stroke="#0030ff" strokeWidth="2.500" fill="none" strokeDasharray="7 2" />
      <path d="M728 833l6-1 10 1 7 4-4 2-12-1-7-2z" fill="#0f0" stroke="#0030ff" strokeDasharray="3 3" />

      <polyline points={[...POINTS.slice(3), [1200, 388], [1211.500, 407]].map((p) => p.join(",")).join(" ")} fill="none" stroke="#0030ff" strokeWidth="2" />
      {POINTS.map((_, i) => <Disc key={i} i={i} />)}
      <path d="M738 849l9-64" stroke="#0f0" strokeWidth="2.200" />
      <path d="M749.700 766l-7.700 18 4 1.500 6-.5z" fill="#087a08" />
      <path d="M749.700 766l-2.200 19.500 4.500-.5z" fill="#066006" />
      <circle cx="737.500" cy="849.500" r="4" fill="#0f0" stroke="#000" strokeDasharray="3 2" />

      {/* dimensions */}
      <g stroke="#fff" fill="none">
        <path d="M794 487.300l129 16.200M741 850l127 16.700M913.200 502.700L859.300 865.700" />
        <path d="M913.200 502.700l-4 12.300 5 .8zM859.300 865.700l-2-12h5.300z" />
        <path d="M998 300l16 216" />
      </g>
      <rect x="1012" y="514" width="4" height="4" fill="#30108a" />
      <rect x="882" y="642" width="20" height="14" fill="#777" opacity=".8" />
      <g fontSize="11.500" fill="#e6e6e6" textAnchor="middle">
        <text x="891.500" y="652.500">100</text>
        <text x="998" y="309">60</text>
      </g>

      {/* origin triad */}
      <path d="M301.500 962l2.500-22" stroke="#0a0" strokeWidth="1.300" />
      <path d="M304.500 933l-6.500 9 5 2 6-2z" fill="#0a8a0a" />
      <path d="M304 962l17 1" stroke="#d00" strokeWidth="1.300" />
      <path d="M330 964.500l-11-5.500 1 10z" fill="#900" />
      <circle cx="302" cy="965.500" r="5.500" fill="#0000b0" />
      <path d="M300 972.500h6" stroke="#5560ff" strokeWidth="1.500" />
      <text x="306" y="930" fontSize="11" textAnchor="middle" fill="#2fe02f">Y</text>
      <text x="336" y="970.500" fontSize="12" textAnchor="middle" fill="#e02f2f">X</text>
    </svg>
  )
}

function NavBar() {
  return (
    <div className="absolute top-[145px] right-[1px] flex h-[198px] w-[34px] flex-col items-center rounded-md border-2 border-[#3c3c3c] bg-linear-to-b from-[#757575] to-[#868686]">
      <svg width="30" height="194" viewBox="0 0 30 194">
        <circle cx="24" cy="6" r="4" fill="#4a4a4a" /><path d="M22 4l4 4M26 4l-4 4" stroke="#ddd" />
        <path d="M15 21h10v11a10 10 0 11-10-11z" fill="#b9bcc0" stroke="#555" />
        <circle cx="15" cy="31" r="6.500" fill="#8f9296" stroke="#666" /><circle cx="15" cy="31" r="3.500" fill="#c4c6c9" />
        <path d="M12 53h5l-2.500 3zM12 115h5l-2.500 3zM12 149h5l-2.500 3z" fill="#4c4c4c" />
        <path d="M2 59.500h26" stroke="#5b5b5b" />
        <path d="M11 80l-3.500-5 1.500-1.500 2.500 2-1.500-7 1.800-.5 2 5 .3-6.500h1.800l1 6.500 2-5.500 1.800.7-1.500 6.800 2.600-2 1.200 1.200-4 6.300v1.500h-7z" fill="#dcdcdc" stroke="#555" strokeWidth=".6" />
        <circle cx="13" cy="97" r="5.500" fill="#cfd6d4" stroke="#444" /><path d="M11 94h3l2 2v4h-5z" fill="#fff" stroke="#555" strokeWidth=".7" /><path d="M17 101l5 5" stroke="#555" strokeWidth="2.500" />
        <g fill="none" stroke="#5c5c5c"><ellipse cx="14.500" cy="132" rx="7.500" ry="3.500" /><ellipse cx="14.500" cy="132" rx="3.500" ry="7.500" /></g>
        <path d="M7.500 164.500h14v10h-14zM8 164l3-3 3 2 3-3 4 2" fill="#b9bcc0" stroke="#444" /><path d="M10.500 167.500h8v4h-8z" fill="#888" stroke="#444" />
        <circle cx="24" cy="188" r="4" fill="#4a4a4a" /><path d="M21.500 187h5M22.500 189.500h3" stroke="#ddd" />
      </svg>
    </div>
  )
}

function Viewport() {
  return (
    <main className="relative w-[1670px] shrink-0 overflow-hidden bg-linear-to-b from-[#2d2d2d] to-[#a4a4a4]">
      <Scene />
      <div className="absolute top-[6px] right-[2px] flex items-center gap-[8px]">
        <span className="mt-[2px] h-[3px] w-[12px] bg-white" />
        <svg width="12" height="11" viewBox="0 0 12 11"><path d="M3 1h8v8H9M1 3h8v7H1z" fill="none" stroke="#fff" strokeWidth="1.600" /><path d="M4 5.500h2v2H4z" fill="#fff" /></svg>
        <svg width="11" height="10" viewBox="0 0 11 10"><path d="M1.500 1l8 8M9.500 1l-8 8" stroke="#fff" strokeWidth="2.500" /></svg>
      </div>
      <NavBar />
    </main>
  )
}

// ── Rectangular Pattern dialog ─────────────────────────────
function Cursor({ fill = "#fff", stroke = "#000" }: { fill?: string; stroke?: string }) {
  return (
    <svg width="11" height="16" viewBox="0 0 11 16" className="-ml-[2px]">
      <path d="M1 1v11.500l2.800-2.600 2 4.600 1.900-.9-2-4.400H9.500z" fill={fill} stroke={stroke} />
    </svg>
  )
}

function ToolButton({ children, active, disabled, className = "" }: { children: ReactNode; active?: boolean; disabled?: boolean; className?: string }) {
  return (
    <div className={`flex h-[24px] w-[24px] shrink-0 items-center justify-center border ${active ? "border-[#569de5] bg-[#cfe5fa]" : disabled ? "border-[#d4d4d4] bg-[#efefef]" : "border-[#acacac] bg-linear-to-b from-[#f0f0f0] to-[#e5e5e5]"} ${className}`}>
      {children}
    </div>
  )
}

function Group({ title, className, children }: { title: string; className: string; children: ReactNode }) {
  return (
    <div className={`relative shrink-0 border border-[#dcdcdc] ${className}`}>
      <span className="absolute -top-[7px] left-[5px] bg-[#f0f0f0] px-[2px] leading-[14px] whitespace-nowrap">{title}</span>
      {children}
    </div>
  )
}

function Beam({ gray }: { gray?: boolean }) {
  return (
    <svg width="18" height="20" viewBox="0 0 18 20">
      <g stroke={gray ? "#888" : "#000"} strokeLinejoin="round">
        <path d="M1 9l8-7 4-1 4 1v3l-3 4-7 4v5l-1 1H1z" fill={gray ? "#b5b5b5" : "#3d74a8"} />
        <path d="M1 9h5v10M6 9l7-6" fill="none" />
        <path d="M7 9l6-4h4v5l-4 4H7z" fill={gray ? "#c2c2c2" : "#ffe23c"} />
        <path d="M7 9h6v5M13 9l4-4" fill="none" />
      </g>
    </svg>
  )
}

function Flip({ gray }: { gray?: boolean }) {
  return (
    <svg width="18" height="18" viewBox="0 0 18 18">
      <path d="M1 9.500h4M12 6.500h5M6 9h3l2-3" stroke={gray ? "#999" : "#1f3f6b"} fill="none" />
      <path d="M9 9c0-4 1-5 3-6M9 4l4-3.500L16 4z" fill={gray ? "#888" : "#111"} stroke={gray ? "#888" : "#223"} />
      <path d="M6 9v6M3 13l3 4 3-4z" fill={gray ? "#aaa" : "#f00"} stroke={gray ? "#aaa" : "#f00"} />
    </svg>
  )
}

function Midplane({ gray }: { gray?: boolean }) {
  const dots = gray ? ["#ccc", "#ccc", "#ccc"] : ["#4d86b8", "#ffe23c", "#4d86b8"]
  return (
    <svg width="18" height="22" viewBox="0 0 18 22">
      <path d="M2 1l6 3h8v12l-6-3H2z" fill={gray ? "#c4c4c4" : "#e8752a"} stroke={gray ? "#999" : "#6b3510"} strokeWidth=".8" />
      <path d="M2 15L16 2M12 1.500h4.500V6M1 10.500V15.500h5" fill="none" stroke={gray ? "#888" : "#000"} strokeWidth="1.600" />
      {dots.map((d, i) => <circle key={i} cx={2.500 + i * 6} cy="19.500" r="1.800" fill={d} stroke={gray ? "#999" : "#000"} strokeWidth=".8" />)}
    </svg>
  )
}

function Ruler() {
  return (
    <svg width="16" height="16" viewBox="0 0 16 16">
      <path d="M1 8l7-7 7.500 7L9 14.500z" fill="#ffe23c" stroke="#000" strokeWidth="1.200" />
      <path d="M1 8l6-6 3 2-6.500 6.500z" fill="#fff" stroke="#000" />
      <path d="M9 14.500l6.500-6.500-1.500-1.500L7.500 13z" fill="#d9a90c" />
    </svg>
  )
}

function NumberField({ value, disabled }: { value: string; disabled?: boolean }) {
  return (
    <div className={`flex h-[20px] w-[90px] border p-px ${disabled ? "border-[#d9d9d9] text-[#838383]" : "border-[#acacac] bg-white"}`}>
      <span className={`w-[72px] pl-[4px] leading-[16px] ${disabled ? "bg-[#c8c8c8]" : ""}`}>{value}</span>
      <span className="flex grow items-center justify-center bg-[#efefef]">
        <svg width="6" height="8" viewBox="0 0 6 8"><path d="M1 .5L4.500 4 1 7.500" fill="none" stroke={disabled ? "#aaa" : "#444"} strokeWidth="1.500" /></svg>
      </span>
    </div>
  )
}

function DirectionGroup({ title, count, length, disabled }: { title: string; count: string; length: string; disabled?: boolean }) {
  const dot = (i: number) => (i === 0 ? "#ffe23c" : "#4d86b8")
  return (
    <Group title={title} className={`h-[142px] w-[131px] pt-[13px] ${disabled ? "pl-[8px]" : "pl-[7px]"}`}>
      <div className="flex items-start">
        <ToolButton><Cursor fill={disabled ? "#d33" : "#fff"} /></ToolButton>
        <ToolButton disabled={disabled} className={disabled ? "ml-[4px]" : "ml-[5px]"}><Flip gray={disabled} /></ToolButton>
        <span className={`mt-[5px] h-[13px] w-[13px] border ${disabled ? "ml-[28px] border-[#ccc] bg-[#e8e8e8]" : "ml-[27px] border-[#707070] bg-white"}`} />
        <span className="ml-[4px]"><Midplane gray={disabled} /></span>
      </div>
      <div className="mt-[11px] flex h-[20px]">
        <div className="w-[23px]">
          <svg width="18" height="18" viewBox="0 0 18 18">
            {[0, 1, 2].map((i) => <circle key={i} cx={disabled ? 15 : 3 + i * 6} cy={disabled ? 3 + i * 6 : 6} r="1.800" fill={dot(i)} stroke="#000" strokeWidth=".8" />)}
          </svg>
        </div>
        <NumberField value={count} disabled={disabled} />
      </div>
      <div className="mt-[13px] flex h-[20px]">
        <div className="w-[19px] pl-[4px]"><Ruler /></div>
        <span className="w-[4px]" />
        <NumberField value={length} disabled={disabled} />
      </div>
      <div className={`mt-[11px] -ml-px flex h-[21px] w-[114px] items-center justify-between border px-[3px] ${disabled ? "border-[#d9d9d9] text-[#838383]" : "border-[#acacac] bg-linear-to-b from-[#f0f0f0] to-[#e5e5e5]"}`}>
        Spacing
        <svg width="8" height="6" viewBox="0 0 8 6"><path d="M.5 1L4 4.500 7.500 1" fill="none" stroke={disabled ? "#bbb" : "#444"} strokeWidth="1.500" /></svg>
      </div>
    </Group>
  )
}

function Radio({ label, checked, disabled }: { label: string; checked?: boolean; disabled?: boolean }) {
  return (
    <div className={`flex h-[23px] items-center gap-[2px] ${disabled ? "text-[#838383]" : ""}`}>
      <span className={`flex h-[13px] w-[13px] items-center justify-center rounded-full border ${disabled ? "border-[#c4c4c4] bg-[#e6e6e6]" : "border-[#707070] bg-white"}`}>
        {checked && <span className="h-[7px] w-[7px] rounded-full bg-[#1e1e1e]" />}
      </span>
      {label}
    </div>
  )
}

function PatternDialog() {
  return (
    <div className="absolute top-[212px] left-[340px] h-[475px] w-[297px] border border-[#3f7f95] bg-[#5aa3bb] pl-[7px] text-[11px] text-black">
      <div className="flex h-[29px] pl-[2px]">
        <span className="w-[249px] text-[15px] leading-[28px] tracking-[-0.5px] whitespace-nowrap text-[#1d3a45]">Rectangular Pattern : Rectangular Pa...</span>
        <span className="flex h-[20px] w-[31px] items-center justify-center bg-[#c75050]">
          <svg width="8" height="8" viewBox="0 0 8 8"><path d="M.5.5l7 7M7.500.5l-7 7" stroke="#fff" strokeWidth="1.600" /></svg>
        </span>
      </div>
      <div className="h-[438px] w-[282px] overflow-hidden border border-[#468ba2] bg-[#f0f0f0] pl-[4px]">
        <div className="flex">
          <div className="mt-[10px] ml-px flex h-[67px] w-[39px] flex-col gap-[7px] border border-[#dcdcdc] pt-[5px] pl-[6px]">
            <ToolButton active><Beam /></ToolButton>
            <ToolButton disabled><Beam gray /></ToolButton>
          </div>
          <div className="mt-[16px] ml-[19px] flex flex-col gap-[7px]">
            <div className="flex items-center gap-[7px]">
              <ToolButton active className="flex-col"><Cursor /><span className="h-[2px] w-[16px] bg-[#0a28e6]" /></ToolButton>
              <span className="pt-[2px]">Features</span>
            </div>
            <div className="flex items-center gap-[6px]">
              <ToolButton disabled className="flex-col"><Cursor fill="#eee" stroke="#999" /><span className="h-[2px] w-[16px] bg-[#c800a0]" /></ToolButton>
              <span className="pt-[2px]">Solid</span>
            </div>
          </div>
        </div>
        <div className="mt-[16px] flex gap-[5px]">
          <DirectionGroup title="Direction 1" count="60 ul" length="4 mm" />
          <DirectionGroup title="Direction 2" count="2" length="10 mm" disabled />
        </div>
        <div className="mt-[9px] flex h-[21px] text-center leading-[19px]">
          <span className="-ml-px flex w-[22px] items-center justify-center border border-[#acacac] bg-[#eaeaea]"><HelpNote /></span>
          <span className="ml-[56px] w-[73px] border border-[#acacac] bg-linear-to-b from-[#f0f0f0] to-[#e5e5e5] pr-[2px]">OK</span>
          <span className="ml-[10px] w-[73px] border border-[#acacac] bg-linear-to-b from-[#f0f0f0] to-[#e5e5e5] pr-[2px]">Cancel</span>
          <span className="ml-[8px] w-[24px] border border-[#3399ff] bg-[#eaeaea]">&lt;&lt;</span>
        </div>
        <div className="mt-[12px] -ml-[2px] h-[2px] w-[267px] border-t border-b border-t-[#a0a0a0] border-b-white" />
        <div className="mt-[15px] flex gap-[5px]">
          <Group title="Direction 1" className="flex h-[49px] w-[131px] items-start pt-[12px] pl-[7px]">
            <ToolButton><Cursor /></ToolButton>
            <span className="ml-[10px] pt-[6px]">Start</span>
          </Group>
          <Group title="Direction 2" className="flex h-[49px] w-[131px] items-start pt-[12px] pl-[11px]">
            <ToolButton disabled><Cursor fill="#999" stroke="#aaa" /></ToolButton>
            <span className="ml-[11px] pt-[6px]">Start</span>
          </Group>
        </div>
        <div className="mt-[12px] ml-px flex gap-[4px]">
          <Group title="Compute" className="h-[80px] w-[122px] pt-[12px] pl-[10px]">
            <Radio label="Optimized" disabled />
            <Radio label="Identical" checked />
            <Radio label="Adjust" />
          </Group>
          <Group title="Orientation" className="h-[80px] w-[141px] pt-[12px] pl-[10px]">
            <Radio label="Identical" />
            <Radio label="Direction1" checked />
            <Radio label="Direction2" disabled />
          </Group>
        </div>
      </div>
    </div>
  )
}

// Hand-drawn pointers over the dialog
function Arrows() {
  return (
    <svg width="480" height="400" viewBox="260 370 480 400" className="absolute top-[370px] left-[260px]">
      <g fill="none" stroke="#000" strokeWidth="4.500" strokeLinejoin="round">
        <path d="M265.500 393h47v-14l47 32-47 32v-15h-47z" />
        <path d="M727 481h-51v-17l-49 34 49 34v-16.500h51z" />
        <path d="M525 660l-35.500 51H507v52.500h36V711h17.500z" />
      </g>
    </svg>
  )
}

// ── Task bar ───────────────────────────────────────────────
const office = (color: string, letter: string) => (
  <g>
    <path d="M2 3l18-2v30L2 28z" fill="#f4f4f4" stroke={color} />
    <path d="M15 2h12l3 3v26H15z" fill="#fff" stroke={color} strokeWidth=".8" />
    <path d="M19 20h9M19 23h9M19 26h9" stroke={color} />
    <text x="11" y="23" fontSize="20" fontWeight="bold" textAnchor="middle" fill={color}>{letter}</text>
  </g>
)

const adsk = (letter: string, tag: string) => (
  <g>
    <rect x="1" y="5" width="30" height="27" fill="#161616" />
    <path d="M18 6c6 0 10 8 12 16l-10-4z" fill="#888" />
    <path d="M20 8c4 3 6 8 7 13" stroke="#ddd" fill="none" />
    <text x="11" y="22" fontSize="22" fontWeight="bold" textAnchor="middle" fill="#eee" stroke="#eee" strokeWidth=".6" fontFamily="Liberation Serif, serif">{letter}</text>
    <path d="M1 25l30-3v10H1z" fill="#f28c1c" />
    <text x="23" y="30" fontSize="7" fontWeight="bold" textAnchor="middle" fill="#fff" textLength="13" lengthAdjust="spacingAndGlyphs">{tag}</text>
  </g>
)

const APPS: { name: string; art: ReactNode; state?: "open" | "active" }[] = [
  {
    name: "ie",
    art: (
      <g fill="none">
        <path d="M8 17h17a9 9 0 10-1.500 5.500" stroke="#49b5f0" strokeWidth="5" />
        <path d="M2 30C-1 24 20 2 29 2c3 1 1 6-1 9" stroke="#f5c52c" strokeWidth="2.500" />
      </g>
    ),
  },
  {
    name: "explorer", state: "open",
    art: (
      <g>
        <path d="M1 7l3-3h7l2 3h17v20H1z" fill="#f3d67a" stroke="#b8912e" />
        <path d="M4 5h6v3H4z" fill="#3fae49" /><path d="M14 5h8v3h-8z" fill="#4a8fe0" /><path d="M22 8h6v2h-6z" fill="#d84040" />
        <path d="M1 11h30v17H1z" fill="#f9e7a6" />
        <path d="M5 31V20h22v11h-5v-5H10v5z" fill="#9fd4f3" stroke="#4a9cc8" />
      </g>
    ),
  },
  { name: "excel", art: office("#2e8b3d", "X") },
  { name: "powerpoint", art: office("#d2512a", "P") },
  { name: "word", art: office("#2556a8", "W") },
  {
    name: "chrome", state: "open",
    art: (
      <g>
        <circle cx="16" cy="17" r="14" fill="#e0402f" />
        <path d="M16 17L4 10a14 14 0 0010 21z" fill="#46a84a" />
        <path d="M16 17l-3 14a14 14 0 0016-19H16z" fill="#f7cf35" />
        <circle cx="16" cy="17" r="6.500" fill="#fff" /><circle cx="16" cy="17" r="5" fill="#3f7fe0" />
      </g>
    ),
  },
  { name: "simulation", art: adsk("S", "CFD") },
  {
    name: "layout",
    art: (
      <g>
        <path d="M1 2l30-1v31H1z" fill="#f2f6f4" />
        <path d="M1 32V26L31 4v28z" fill="#5fa83c" opacity=".55" />
        <rect x="5" y="5" width="22" height="23" fill="#dbe86a" stroke="#2c4a1b" strokeWidth="1.300" />
        <path d="M14 5h13v13H14z" fill="#58c4d8" stroke="#1f5a66" />
      </g>
    ),
  },
  {
    name: "3ds",
    art: (
      <g>
        <rect x="0" y="1" width="31" height="31" fill="#020306" />
        <path d="M31 6C22 12 18 20 22 31c5-2 8-6 9-10z" fill="#c2643a" />
        <path d="M31 6C22 12 20 20 23 31" stroke="#6fc0f5" strokeWidth="2.500" fill="none" />
        <path d="M1 8l7 2-5 4c5 1 4 5-2 6M12 7l-3 11c4 1 7-9 2-11M20 9c-5 0-4 3-2 5s0 5-5 5" stroke="#fff" strokeWidth="1.500" fill="none" />
      </g>
    ),
  },
  {
    name: "recorder",
    art: (
      <g>
        <rect x="0" y="1" width="32" height="31" rx="6" fill="#0d0f10" />
        <rect x="4" y="8" width="24" height="17" fill="#1c8c96" />
        <path d="M4 5.500h24M4 27.500h24" stroke="#aaa" strokeWidth="2" strokeDasharray="2 1.500" />
        <path d="M9 12h10v9H9zM19 16l5-4v9l-5-4z" fill="#051a1c" />
      </g>
    ),
  },
  { name: "inventor", state: "active", art: adsk("I", "PRO") },
  {
    name: "paint",
    art: (
      <g>
        <path d="M15 6c9 0 13 6 12 12-1 3-5 1-6 4s3 8-6 9S1 26 1 19 7 6 15 6z" fill="#dbeaf5" stroke="#6b9cc0" />
        <circle cx="8" cy="13" r="2.500" fill="#e04040" /><circle cx="16" cy="11" r="2.500" fill="#f0c030" /><circle cx="6" cy="20" r="2.500" fill="#40a850" /><circle cx="12" cy="26" r="2.500" fill="#3a70d8" />
        <path d="M16 24L27 7" stroke="#b07030" strokeWidth="2.500" /><path d="M26 8l2-7 3 2-2 7z" fill="#e0b070" />
      </g>
    ),
  },
  {
    name: "ansys",
    art: (
      <g>
        <rect x="0" y="1" width="32" height="31" rx="4" fill="#fbb81b" />
        <path d="M13 2h6l10 30H20L16 14l-4 18H3z" fill="#141414" />
      </g>
    ),
  },
  {
    name: "movie",
    art: (
      <g>
        <path d="M3 8c5-3 12-3 20-1l-3 20c-6 2-11 1-15-1z" fill="#e8762a" stroke="#8a3c10" />
        <path d="M7.500 9h10l-1 6h-9zM8 17h8.500l-1 7H8z" fill="#6ea8d8" stroke="#2d5f8c" strokeWidth=".6" />
        <path d="M5 9v15M20 9l-2 16" stroke="#ffd9a8" strokeWidth="1.500" strokeDasharray="2 2" />
        <path d="M26 9c-4 5-4 12-6 18 5 1 8-1 10-3" stroke="#d8b060" strokeWidth="2" fill="none" />
      </g>
    ),
  },
  {
    name: "mpc",
    art: (
      <g>
        <path d="M2 10L27 2l1 5L3 14z" fill="#fff" stroke="#111" /><path d="M6 9l4 3M13 6l4 4M20 4l4 4" stroke="#111" strokeWidth="3" />
        <path d="M2 13h27v18H4z" fill="#f4f4f4" stroke="#111" />
        <g fontSize="14" fontWeight="bold"><text x="4" y="28" fill="#c22">3</text><text x="12" y="28" fill="#2a5fc0">2</text><text x="20" y="28" fill="#2a9040">1</text></g>
      </g>
    ),
  },
]

function TrayIcons() {
  return (
    <svg width="186" height="18" viewBox="0 0 186 18">
      <rect x="0" y="1" width="16" height="16" fill="#f00" /><path d="M1 12l4-5v4h2l2-4v4h2l3-5v6" stroke="#fff" strokeWidth="1.500" fill="none" />
      <circle cx="32" cy="9" r="7.500" fill="#2c9a4b" stroke="#e8f5ea" /><path d="M28.500 5v5c0 4 6 4 6 0V5v6l2 2" stroke="#fff" strokeWidth="2" fill="none" />
      <rect x="48" y="1" width="16" height="16" fill="#f0a848" /><circle cx="56" cy="9" r="4.500" fill="none" stroke="#222" strokeWidth="2.500" /><circle cx="60" cy="13" r="3.700" fill="#2f9e44" /><path d="M58.500 13l1.200 1.500 2-3" stroke="#fff" fill="none" />
      <path d="M73 12l6-4 6 2M80 9l3-6M78 15l3-4" stroke="#ccc" strokeWidth="1.500" fill="none" /><circle cx="80" cy="9.500" r="3" fill="#d83030" /><circle cx="74.500" cy="11.500" r="1.800" fill="#bbb" /><circle cx="85" cy="11" r="1.800" fill="#bbb" /><circle cx="83" cy="3.500" r="1.500" fill="#ddd" />
      <path d="M98 2v14" stroke="#fff" strokeWidth="1.800" /><path d="M99 3h6v2h5l-2 3 1 2h-5V8h-5z" fill="#fff" />
      <path d="M122 2h5v4h-5zM121 6h7v6l-2 2v3h-2v-3l-3-2z" fill="#8f979b" stroke="#444" strokeWidth=".6" /><circle cx="131" cy="12" r="5" fill="#3fa535" /><path d="M128.500 12l2 2 3-4" stroke="#fff" strokeWidth="1.500" fill="none" />
      <path d="M149 4.500h10v8h-9M154 13v3M150 16h8" stroke="#fff" strokeWidth="1.500" fill="none" /><path d="M145 2.500h4v4h-4zM147 7v6" stroke="#fff" fill="none" strokeWidth="1.300" />
      <path d="M169 6.500h2.500L175 3v12l-3.500-3.500H169z" fill="#fff" /><path d="M177 6.500q2 2.500 0 5M179.500 4.500q3.500 4.500 0 9M182 3q4.500 6 0 12" stroke="#fff" fill="none" />
    </svg>
  )
}

function Taskbar() {
  return (
    <footer className="flex h-[40px] shrink-0 bg-linear-to-b from-[#37748b] to-[#347088] pl-[15px] text-white">
      {APPS.map((a) => (
        <div key={a.name} className="flex w-[62px] shrink-0 pl-px">
          <div className={`flex h-[39px] w-[59px] items-center justify-center border ${a.state === "active" ? "border-[#dfeaee] bg-[#86aab8]" : a.state === "open" ? "border-[#86abb9] bg-[#5a8ea2]" : "border-transparent"}`}>
            <svg width="32" height="33" viewBox="0 0 32 33">{a.art}</svg>
          </div>
        </div>
      ))}
      <span className="grow" />
      <div className="flex items-center pt-[2px]"><TrayIcons /></div>
      <span className="ml-[12px] w-[26px] text-[12px] leading-[42px] tracking-[-0.4px]">ENG</span>
      <div className="mr-[20px] ml-[9px] w-[60px] pt-[4px] text-center text-[12px] leading-[17px] tracking-[-0.4px] whitespace-nowrap">
        8:15 PM<br />12/25/2012
      </div>
    </footer>
  )
}

export default function App() {
  return (
    <div className="relative flex h-[1080px] w-[1920px] flex-col overflow-hidden bg-[#404040] font-['Open_Sans','Noto_Sans',sans-serif] text-[12px] tracking-[-0.3px] text-[#333]">
      <Header />
      <div className="flex h-[94px] shrink-0 border-t border-b border-t-white border-b-[#8a8a8a] bg-linear-to-b from-[#d6d6d6] to-[#8c8c8c]">
        {PANELS.map((p) => <RibbonPanel key={p.title} panel={p} />)}
      </div>
      <div className="h-[2px] shrink-0 bg-[#8a8a8a]" />
      <div className="flex h-[876px] shrink-0 bg-[#e6e6e6]">
        <ModelBrowser />
        <Viewport />
      </div>
      <div className="flex h-[26px] shrink-0 items-center bg-linear-to-b from-[#f6f6f6] to-[#b0b0b0] pt-[4px] pl-[1px] text-[11.5px] tracking-[-0.2px] text-black">
        <span className="grow">Select feature to pattern</span>
        <span className="-mt-[3px] h-[20px] w-[40px] border-l border-[#d0d0d0] pl-[9px] leading-[22px] text-[#2a1a5e]">1</span>
        <span className="-mt-[3px] h-[20px] w-[39px] border-l border-[#d0d0d0] pl-[7px] leading-[22px] text-[#2a1a5e]">1</span>
      </div>
      <Taskbar />
      <PatternDialog />
      <Arrows />
    </div>
  )
}
